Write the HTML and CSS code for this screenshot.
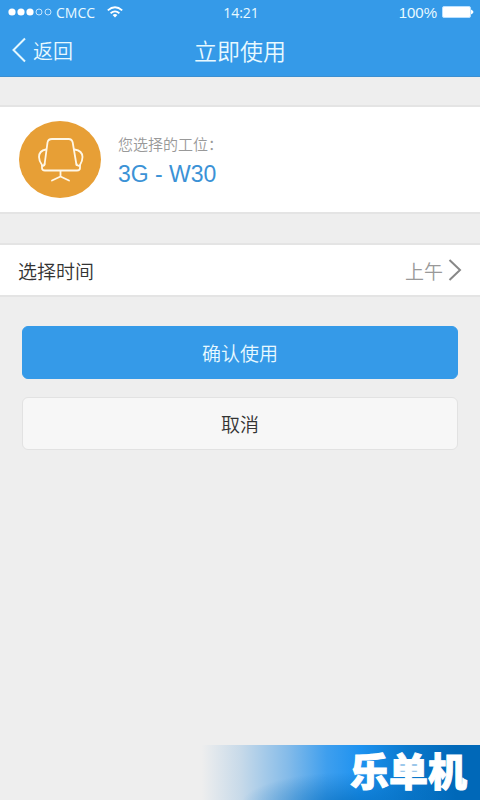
FILE: index.html
```html
<!DOCTYPE html>
<html lang="zh-CN">
<head>
<meta charset="utf-8">
<meta name="viewport" content="width=device-width, initial-scale=1">
<title>立即使用</title>
<link rel="stylesheet" href="styles.css">
</head>
<body>
<header class="header">
  <div class="status">
    <div class="status-side">
      <svg class="signal" width="44" height="8" viewBox="0 0 44 8" aria-hidden="true">
        <g fill="#fff"><circle cx="4" cy="4" r="3.6"/><circle cx="13" cy="4" r="3.6"/><circle cx="22" cy="4" r="3.6"/></g>
        <g fill="none" stroke="#d4ecff" stroke-width="0.9"><circle cx="31" cy="4" r="3"/><circle cx="40" cy="4" r="3"/></g>
      </svg>
      <span class="carrier">CMCC</span>
      <svg class="wifi" width="16" height="12" viewBox="0 0 16 12" aria-hidden="true">
        <g fill="none" stroke="#fff" stroke-width="1.8"><path d="M0.8 4.4Q8-1.8 15.2 4.4"/><path d="M3.6 7.2Q8 3.6 12.4 7.2"/></g>
        <path fill="#fff" d="M5.6 9Q8 7.2 10.4 9L8 11.4Z"/>
      </svg>
    </div>
    <time class="clock">14:21</time>
    <div class="status-side status-end">
      <span class="percent">100%</span>
      <svg width="32" height="12" viewBox="0 0 32 12" aria-hidden="true">
        <rect x="0.5" y="0.5" width="28" height="11" rx="1.5" fill="#fff" stroke="#b9e0ff"/>
        <path d="M29 3.5Q34 6 29 8.5Z" fill="#fff"/>
      </svg>
    </div>
  </div>
  <nav class="nav">
    <a class="back" href="#">
      <svg width="14" height="26" viewBox="0 0 14 26" aria-hidden="true"><path d="M13 1.5L1.5 13L13 24.5" fill="none" stroke="#e4f8ff" stroke-width="2"/></svg>
      返回
    </a>
    <h1 class="title">立即使用</h1>
  </nav>
</header>
<main>
  <section class="panel seat">
    <svg class="seat-icon" width="82" height="77" viewBox="0 0 82 77" aria-hidden="true">
      <ellipse cx="41" cy="38.5" rx="41" ry="38.5" fill="#e79f36"/>
      <g fill="none" stroke="#fff7e6" stroke-width="1.8" stroke-linecap="round" stroke-linejoin="round">
        <path d="M25.5 44L28.5 21.500Q29 18 33 18H49.500Q53 18 53.700 21.500L57.500 44"/>
        <path d="M27 28.500C21.500 29.500 20 33 20 36Q20 40 23 44V47Q23 49.500 26 49.500H58Q61 49.500 61 47V44Q63.500 40 63.500 36C63.500 33 61.500 29.500 55.500 28.500"/>
        <path d="M23 44.500Q25 45.500 25.500 43M61 44.500Q58.500 45.500 57.500 43"/>
        <path d="M41.500 50V55.500M33 59.500L41.500 55.500L50 59.500"/>
      </g>
    </svg>
    <div class="seat-text">
      <p class="seat-label">您选择的工位：</p>
      <p class="seat-name">3G - W30</p>
    </div>
  </section>
  <button class="panel time-row" type="button">
    <span>选择时间</span>
    <span class="time-value">上午
      <svg width="14" height="22" viewBox="0 0 14 22" aria-hidden="true"><path d="M1.5 1L12 11L1.5 21" fill="none" stroke="#888" stroke-width="2"/></svg>
    </span>
  </button>
  <div class="actions">
    <button class="action primary" type="button">确认使用</button>
    <button class="action secondary" type="button">取消</button>
  </div>
</main>
<footer class="brand"><span class="brand-name">乐单机</span></footer>
</body>
</html>
```
FILE: styles.css
```css
* { box-sizing: border-box; }

body {
  display: flex;
  flex-direction: column;
  min-height: 100vh;
  margin: 0;
  background: #eee;
  color: #333;
  font-family: "Liberation Sans", "Noto Sans CJK SC", sans-serif;
}

h1, p { margin: 0; }
svg { display: block; flex: none; }
button { font: inherit; cursor: pointer; }

.header {
  background: #359ae8;
  border-bottom: 1px solid #3b8fd1;
  color: #e8f9ff;
}

.status {
  display: grid;
  grid-template-columns: 1fr auto 1fr;
  align-items: center;
  height: 24px;
  padding: 0 6px 0 8px;
  font-family: "Open Sans", "Noto Sans", sans-serif;
  font-size: 14px;
}

.status-side { display: flex; align-items: center; }
.status-end { justify-content: flex-end; gap: 5px; }
.carrier { margin: 0 12px 0 4px; }
.percent { font-family: "Liberation Sans", sans-serif; font-size: 15px; }

.nav {
  display: grid;
  grid-template-columns: 1fr auto 1fr;
  align-items: center;
  height: 52px;
  padding: 0 12px;
}

.back {
  display: flex;
  align-items: center;
  gap: 7px;
  color: inherit;
  font-size: 20px;
  font-weight: 350;
  text-decoration: none;
}

.title { font-size: 23px; font-weight: 350; }

.panel {
  width: 100%;
  border: solid #e4e4e4;
  border-width: 2px 0;
  background: #fff;
}

.seat {
  display: flex;
  align-items: center;
  gap: 17px;
  margin-top: 28px;
  padding: 14px 19px;
}

.seat-text { padding-top: 4px; }
.seat-label { color: #999; font-size: 15px; font-weight: 350; line-height: 24px; }
.seat-name { color: #3b92d6; font-size: 23px; line-height: 34px; }

.time-row {
  display: flex;
  align-items: center;
  justify-content: space-between;
  min-height: 54px;
  margin-top: 29px;
  padding: 0 18px;
  color: #333;
  font-size: 19px;
  font-weight: 350;
}

.time-value { display: flex; align-items: center; gap: 5px; color: #999; }

.actions {
  display: grid;
  gap: 18px;
  padding: 29px 22px;
}

.action {
  height: 53px;
  border: 1px solid #359ae8;
  border-radius: 6px;
  font-size: 19px;
  font-weight: 350;
}

.primary { background: #359ae8; color: #e8f9ff; }
.secondary { border-color: #e2e2e2; background: #f7f7f7; color: #333; }

.brand {
  display: flex;
  align-items: center;
  justify-content: flex-end;
  height: 55px;
  margin-top: auto;
  padding-right: 13px;
  background:
    radial-gradient(ellipse 22% 60% at 72% 110%, #0068b8aa, transparent),
    linear-gradient(90deg, #eee 42%, #c8dae9 50%, #84bbe9 60%, #3f9fee 68%, #1d92f0 75%, #0a78cc 85%, #0068b8 95%);
  color: #fff;
}

.brand-name {
  font-size: 39px;
  font-weight: 900;
  line-height: 55px;
  -webkit-text-stroke: 1px #fff;
}
```
